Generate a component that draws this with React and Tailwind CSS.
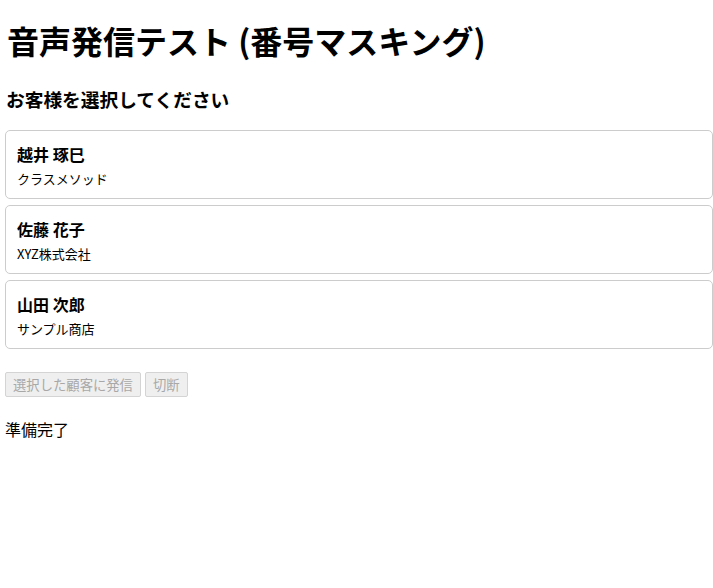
import React, { useState } from "react";

const CUSTOMERS = [
    { id: 1, name: "越井 琢巳", company: "クラスメソッド" },
    { id: 2, name: "佐藤 花子", company: "XYZ株式会社" },
    { id: 3, name: "山田 次郎", company: "サンプル商店" },
];

const CustomerCard = ({ customer, selected, onSelect }) => (
    <div
        onClick={() => onSelect(customer.id)}
        className={`h-[69px] rounded-[5px] border px-[11px] pt-[11px] cursor-pointer ${
            selected ? "border-blue-400 bg-blue-50" : "border-[#cccccc] bg-white"
        }`}
    >
        <div className="text-[16px] font-bold leading-[24px]">{customer.name}</div>
        <div className="text-[13px] leading-[20px] mt-[3px]">{customer.company}</div>
    </div>
);

export default function App() {
    const [selected, setSelected] = useState(null);

    return (
        <div
            className="min-h-screen bg-white text-black pl-[5px]"
            style={{ fontFamily: '"Noto Sans CJK JP", "Noto Sans", sans-serif' }}
        >
            {/* Title */}
            <h1 className="text-[32px] font-bold leading-[40px] pt-[20px] pl-[2px]">
                音声発信テスト (番号マスキング)
            </h1>
            <h3 className="text-[18.72px] font-bold leading-[24px] mt-[27px] pl-[1px]">
                お客様を選択してください
            </h3>

            {/* Customer list */}
            <div className="flex flex-col gap-[6px] mt-[19px]">
                {CUSTOMERS.map((c) => (
                    <CustomerCard key={c.id} customer={c} selected={selected === c.id} onSelect={setSelected} />
                ))}
            </div>

            {/* Actions */}
            <div className="flex gap-[4px] mt-[23px]">
                <button
                    disabled={!selected}
                    className="h-[25px] px-[7px] text-[13.33px] leading-[20px] border border-[#d4d4d4] bg-[#efefef] text-[#a8a8a8] rounded-[2px]"
                >
                    選択した顧客に発信
                </button>
                <button
                    disabled
                    className="h-[25px] px-[7px] text-[13.33px] leading-[20px] border border-[#d4d4d4] bg-[#efefef] text-[#a8a8a8] rounded-[2px]"
                >
                    切断
                </button>
            </div>

            {/* Status */}
            <p className="text-[16px] leading-[24px] mt-[20px]">準備完了</p>
        </div>
    );
}
